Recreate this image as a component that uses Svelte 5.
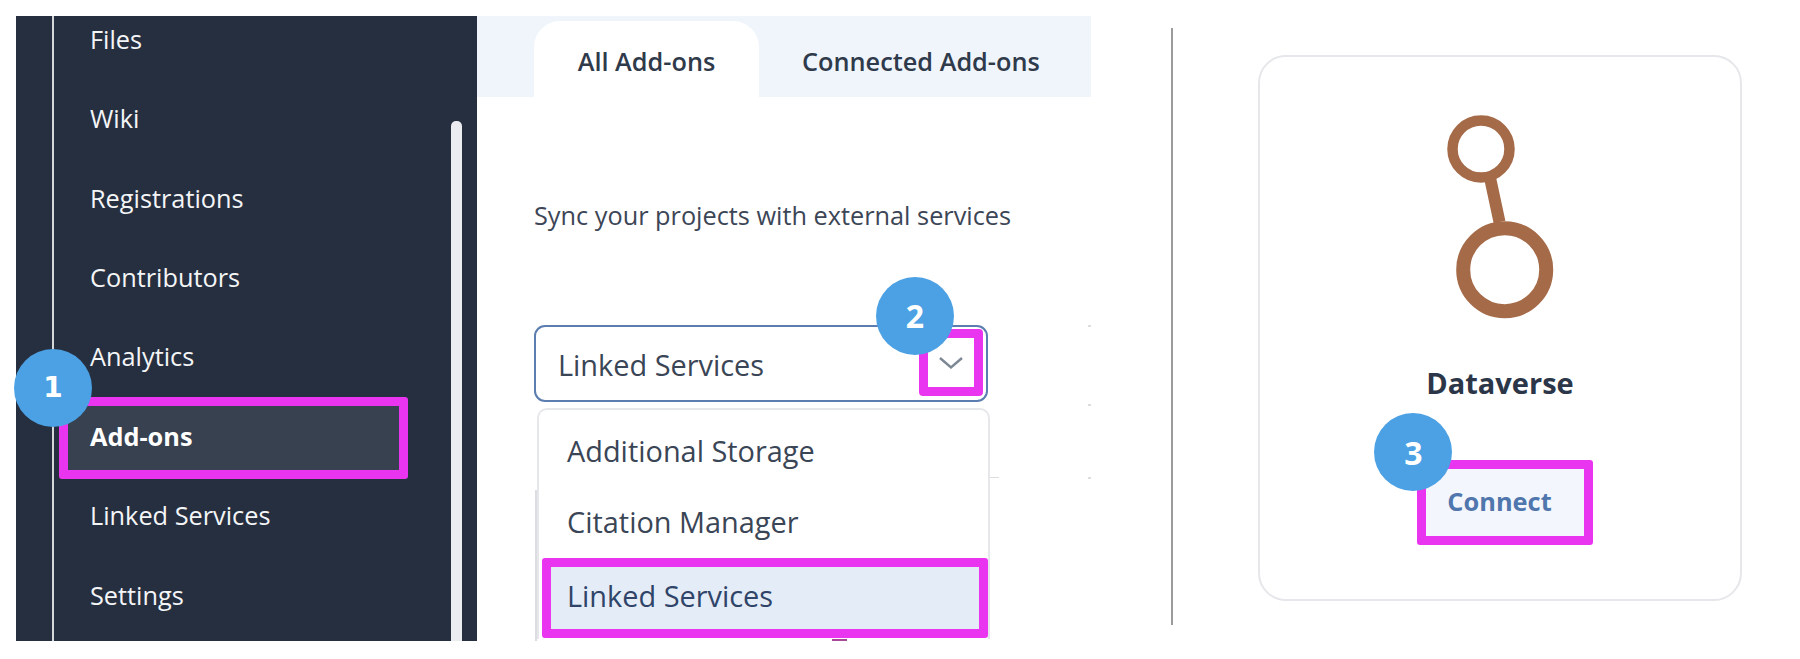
<script>
  const navItems = ['Files', 'Wiki', 'Registrations', 'Contributors', 'Analytics', 'Add-ons', 'Linked Services', 'Settings'];
  const options = ['Additional Storage', 'Citation Manager', 'Linked Services'];
</script>

<div class="page">
  <div class="panel">
    <aside class="sidebar">
      <div class="rail"></div>
      <nav class="nav">
        {#each navItems as item}
          <div class="nav-row" class:active={item === 'Add-ons'}>
            {item}
            {#if item === 'Add-ons'}<span class="badge badge-one">1</span>{/if}
          </div>
        {/each}
      </nav>
      <div class="scrollbar"></div>
    </aside>

    <main class="main">
      <div class="tabs">
        <div class="tab current">All Add-ons</div>
        <div class="tab">Connected Add-ons</div>
      </div>
      <p class="intro">Sync your projects with external services</p>

      <span class="peek dot dot-a"></span>
      <span class="peek dot dot-b"></span>
      <span class="peek dot dot-c"></span>
      <span class="peek stub"></span>
      <span class="peek edge"></span>
      <span class="peek tick"></span>

      <div class="select">
        <span class="select-value">Linked Services</span>
        <span class="chevron-box">
          <svg width="26" height="16" viewBox="0 0 26 16" aria-hidden="true">
            <path d="M2 3 L13 12.5 L24 3" fill="none" stroke="#7d8794" stroke-width="2.4" />
          </svg>
        </span>
        <span class="badge badge-two">2</span>
        <div class="menu">
          {#each options as option}
            <div class="option" class:selected={option === 'Linked Services'}>{option}</div>
          {/each}
        </div>
      </div>
    </main>
  </div>

  <div class="divider"></div>

  <section class="card">
    <svg class="logo" width="120" height="215" viewBox="0 0 120 215" aria-label="Dataverse logo">
      <g fill="none" stroke="#a56a48">
        <path d="M50.5 70 L59.5 112" stroke-width="12" />
        <circle cx="41" cy="39" r="28.5" stroke-width="10.5" />
        <circle cx="64.7" cy="159.7" r="41.5" stroke-width="14" />
      </g>
    </svg>
    <h3 class="title">Dataverse</h3>
    <div class="connect">
      Connect
      <span class="badge badge-three">3</span>
    </div>
  </section>
</div>

<style>
  :global(body) {
    margin: 0;
    background: #fff;
  }

  .page {
    display: flex;
    align-items: flex-start;
    box-sizing: border-box;
    width: 1800px;
    height: 659px;
    padding: 16px 0 0 16px;
    font-family: "Open Sans", "Liberation Sans", sans-serif;
    overflow: hidden;
  }

  .panel {
    display: flex;
    flex: none;
    width: 1075px;
    height: 625px;
  }

  .sidebar {
    display: flex;
    flex: none;
    width: 461px;
    background: #262f3f;
    color: #f4f5f7;
  }

  .rail {
    flex: none;
    width: 36px;
    border-right: 2px solid #d5d7db;
  }

  .nav {
    flex: 1;
    margin-top: -16.9px;
    font-size: 25.3px;
  }

  .nav-row {
    position: relative;
    box-sizing: border-box;
    display: flex;
    align-items: center;
    height: 79.4px;
    width: 349px;
    margin-left: 5px;
    padding-left: 31px;
  }

  .nav-row.active {
    height: 82px;
    margin: 0.9px 0 -3.5px 5px;
    padding: 0 0 3px 22px;
    border: 9px solid #e935f0;
    border-radius: 3px;
    background: #37414f;
    font-weight: 700;
    color: #fff;
  }

  .scrollbar {
    flex: none;
    width: 11px;
    margin: 105px 15px 0 0;
    border-radius: 5px 5px 0 0;
    background: #ebecf0;
  }

  .main {
    position: relative;
    flex: 1;
    background: #fff;
    color: #2f3a4b;
  }

  .tabs {
    display: flex;
    box-sizing: border-box;
    height: 81px;
    padding: 5px 0 0 57px;
    background: #f0f5fc;
  }

  .tab {
    display: flex;
    align-items: center;
    padding: 4px 0 0 43px;
    font-size: 25.3px;
    font-weight: 600;
  }

  .tab.current {
    justify-content: center;
    width: 225px;
    box-sizing: border-box;
    padding: 4px 0 0;
    background: #fff;
    border-radius: 26px 26px 0 0;
  }

  .intro {
    margin: 102px 0 94px 57px;
    font-size: 25.3px;
    line-height: 32px;
    color: #3c4656;
  }

  .peek {
    position: absolute;
    background: #dcdde0;
  }

  .dot {
    left: 611px;
    width: 3px;
    height: 2px;
  }

  .dot-a { top: 309px; }
  .dot-b { top: 388px; }
  .dot-c { top: 461px; }

  .stub {
    left: 512px;
    top: 461px;
    width: 10px;
    height: 1px;
  }

  .edge {
    left: 58px;
    top: 474px;
    width: 2px;
    height: 151px;
  }

  .tick {
    left: 355px;
    top: 623px;
    width: 15px;
    height: 2px;
    background: #a84a96;
  }

  .select {
    position: relative;
    box-sizing: border-box;
    display: flex;
    align-items: center;
    width: 454px;
    height: 77px;
    margin-left: 57px;
    padding: 2px 0 0 22px;
    border: 2px solid #5b7db0;
    border-radius: 11px;
    background: #fff;
    font-size: 28.9px;
    color: #3a4556;
  }

  .chevron-box {
    position: absolute;
    left: 383px;
    top: 2px;
    box-sizing: border-box;
    display: flex;
    align-items: center;
    justify-content: center;
    width: 64px;
    height: 67px;
    border: 9px solid #e935f0;
    border-radius: 4px;
  }

  .menu {
    position: absolute;
    left: 1px;
    top: 81px;
    box-sizing: border-box;
    width: 453px;
    height: 231px;
    padding: 4.5px 0 0 3px;
    border: 2px solid #e6e7ea;
    border-bottom: 0;
    border-radius: 10px 10px 0 0;
    background: #fff;
  }

  .option {
    box-sizing: border-box;
    display: flex;
    align-items: center;
    height: 71.6px;
    padding-left: 25px;
  }

  .option.selected {
    width: 446px;
    height: 80.5px;
    padding: 0 0 5px 16px;
    border: 9px solid #e935f0;
    border-radius: 3px;
    background: #e4ecf7;
    color: #2f4468;
  }

  .divider {
    flex: none;
    width: 2px;
    height: 597px;
    margin: 12px 0 0 80px;
    background: #9b9b9b;
  }

  .card {
    flex: none;
    box-sizing: border-box;
    display: flex;
    flex-direction: column;
    align-items: center;
    width: 484px;
    height: 546px;
    margin: 39px 0 0 85px;
    border: 2px solid #e6e7ea;
    border-radius: 28px;
  }

  .logo {
    flex: none;
    margin-top: 53px;
  }

  .title {
    margin: 38px 0 0;
    font-size: 29px;
    line-height: 40px;
    font-weight: 700;
    color: #2b3648;
  }

  .connect {
    position: relative;
    box-sizing: border-box;
    display: flex;
    align-items: center;
    justify-content: center;
    width: 176px;
    height: 85px;
    margin: 57px 0 0 10px;
    padding: 0 11px 4px 0;
    border: 9px solid #e935f0;
    border-radius: 3px;
    background: #f3f6fc;
    font-size: 25.4px;
    font-weight: 700;
    color: #4f76ad;
  }

  .badge {
    position: absolute;
    display: flex;
    align-items: center;
    justify-content: center;
    width: 78px;
    height: 78px;
    border-radius: 50%;
    background: #4ba1e4;
    color: #fff;
    font-family: "Open Sans", sans-serif;
    font-size: 32px;
    font-weight: 700;
  }

  .badge-one {
    left: -54px;
    top: -57px;
    font-family: "DejaVu Sans", sans-serif;
    font-size: 28px;
  }

  .badge-two {
    left: 340px;
    top: -50px;
    padding-bottom: 2px;
    box-sizing: border-box;
  }

  .badge-three {
    left: -52px;
    top: -56px;
    padding-left: 1px;
    box-sizing: border-box;
  }
</style>
